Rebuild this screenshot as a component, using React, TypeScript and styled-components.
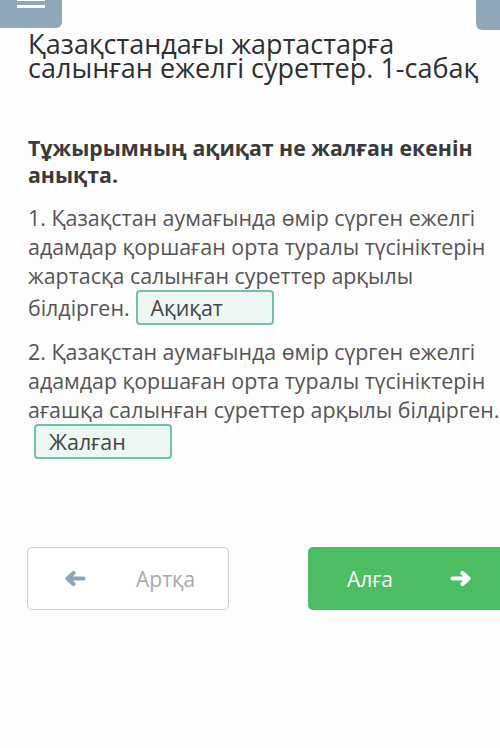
import { createGlobalStyle, styled } from "styled-components";

const GlobalStyle = createGlobalStyle`
  html, body {
    margin: 0;
    padding: 0;
    background: #fdfdfd;
  }
  body {
    font-family: "Open Sans", "Noto Sans", sans-serif;
    color: #333;
  }
`;

type Statement = {
  num: number;
  text: string;
  answer: string;
};

const statements: Statement[] = [
  {
    num: 1,
    text: "Қазақстан аумағында өмір сүрген ежелгі адамдар қоршаған орта туралы түсініктерін жартасқа салынған суреттер арқылы білдірген.",
    answer: "Ақиқат",
  },
  {
    num: 2,
    text: "Қазақстан аумағында өмір сүрген ежелгі адамдар қоршаған орта туралы түсініктерін ағашқа салынған суреттер арқылы білдірген.",
    answer: "Жалған",
  },
];

// chunky arrow like the old font-awesome one, points right by default
const Arrow = ({ left, color }: { left?: boolean; color: string }) => (
  <svg
    width="22"
    height="15"
    viewBox="0 0 22 15"
    style={{ transform: left ? "scaleX(-1)" : undefined }}
  >
    <path
      d="M2.5 7.5 H18 M12.5 2 L18.5 7.5 L12.5 13"
      fill="none"
      stroke={color}
      strokeWidth="4.2"
      strokeLinecap="round"
      strokeLinejoin="round"
    />
  </svg>
);

const App = () => {
  return (
    <>
      <GlobalStyle />
      <StPage>
        <StTopBar>
          <StMenuTab>
            <StMenuLine />
            <StMenuLine />
          </StMenuTab>
          <StSideTab />
        </StTopBar>
        <StTitle>Қазақстандағы жартастарға салынған ежелгі суреттер. 1-сабақ</StTitle>
        <StTask>Тұжырымның ақиқат не жалған екенін анықта.</StTask>
        {statements.map(item => (
          <StStatement key={item.num}>
            {`${item.num}. ${item.text}\u200B`}
            <StAnswer>{item.answer}</StAnswer>
          </StStatement>
        ))}
        <StNav>
          <StNavButton $gap={50}>
            <Arrow left color="#8fa6b8" />
            <span>Артқа</span>
          </StNavButton>
          <StNavButton $primary $gap={57}>
            <span>Алға</span>
            <Arrow color="#fff" />
          </StNavButton>
        </StNav>
      </StPage>
    </>
  );
};

export default App;

const StPage = styled.div`
  width: 500px;
  height: 748px;
  overflow: hidden;
  box-sizing: border-box;
`;

const StTopBar = styled.div`
  display: flex;
  justify-content: space-between;
  height: 30px;
`;

const StMenuTab = styled.div`
  width: 62px;
  height: 30px;
  background: #8fa7b9;
  border-radius: 0 0 6px 0;
  display: flex;
  flex-direction: column;
  align-items: center;
  gap: 4px;
  margin-top: -2px;
`;

const StMenuLine = styled.div`
  width: 28px;
  height: 3px;
  background: #fff;
`;

const StSideTab = styled.div`
  width: 24px;
  height: 30px;
  background: #8fa7b9;
  border-radius: 0 0 0 6px;
`;

const StTitle = styled.h1`
  margin: 2px 0 0 28px;
  font-size: 27px;
  font-weight: 400;
  line-height: 24px;
  color: #2f2f2f;
`;

const StTask = styled.p`
  margin: 54px 20px 0 28px;
  font-size: 21.3px;
  font-weight: 700;
  line-height: 27px;
  color: #3a3a3a;
`;

const StStatement = styled.p`
  margin: 15px 0 0 28px;
  font-size: 21.4px;
  line-height: 29px;
  color: #555;

  & + & {
    margin-top: 12px;
  }
`;

const StAnswer = styled.span`
  display: inline-block;
  box-sizing: border-box;
  width: 138px;
  height: 35px;
  margin-left: 6px;
  padding: 0 13px;
  line-height: 31px;
  border: 2px solid #6ec2aa;
  border-radius: 4px;
  background: #edf8f4;
  color: #444;
`;

const StNav = styled.div`
  display: flex;
  gap: 79px;
  margin: 88px 0 0 27px;
`;

const StNavButton = styled.button<{ $primary?: boolean; $gap: number }>`
  flex: 0 0 auto;
  width: 202px;
  height: 63px;
  display: flex;
  align-items: center;
  gap: ${props => props.$gap}px;
  padding: 0 0 0 ${props => (props.$primary ? "39px" : "36px")};
  box-sizing: border-box;
  border: ${props => (props.$primary ? "none" : "1.5px solid #c9ced3")};
  border-radius: 5px;
  background: ${props => (props.$primary ? "#4cbd62" : "#fff")};
  color: ${props => (props.$primary ? "#fff" : "#a9a9a9")};
  font-family: "Open Sans", "Noto Sans", sans-serif;
  font-size: 21px;
`;
